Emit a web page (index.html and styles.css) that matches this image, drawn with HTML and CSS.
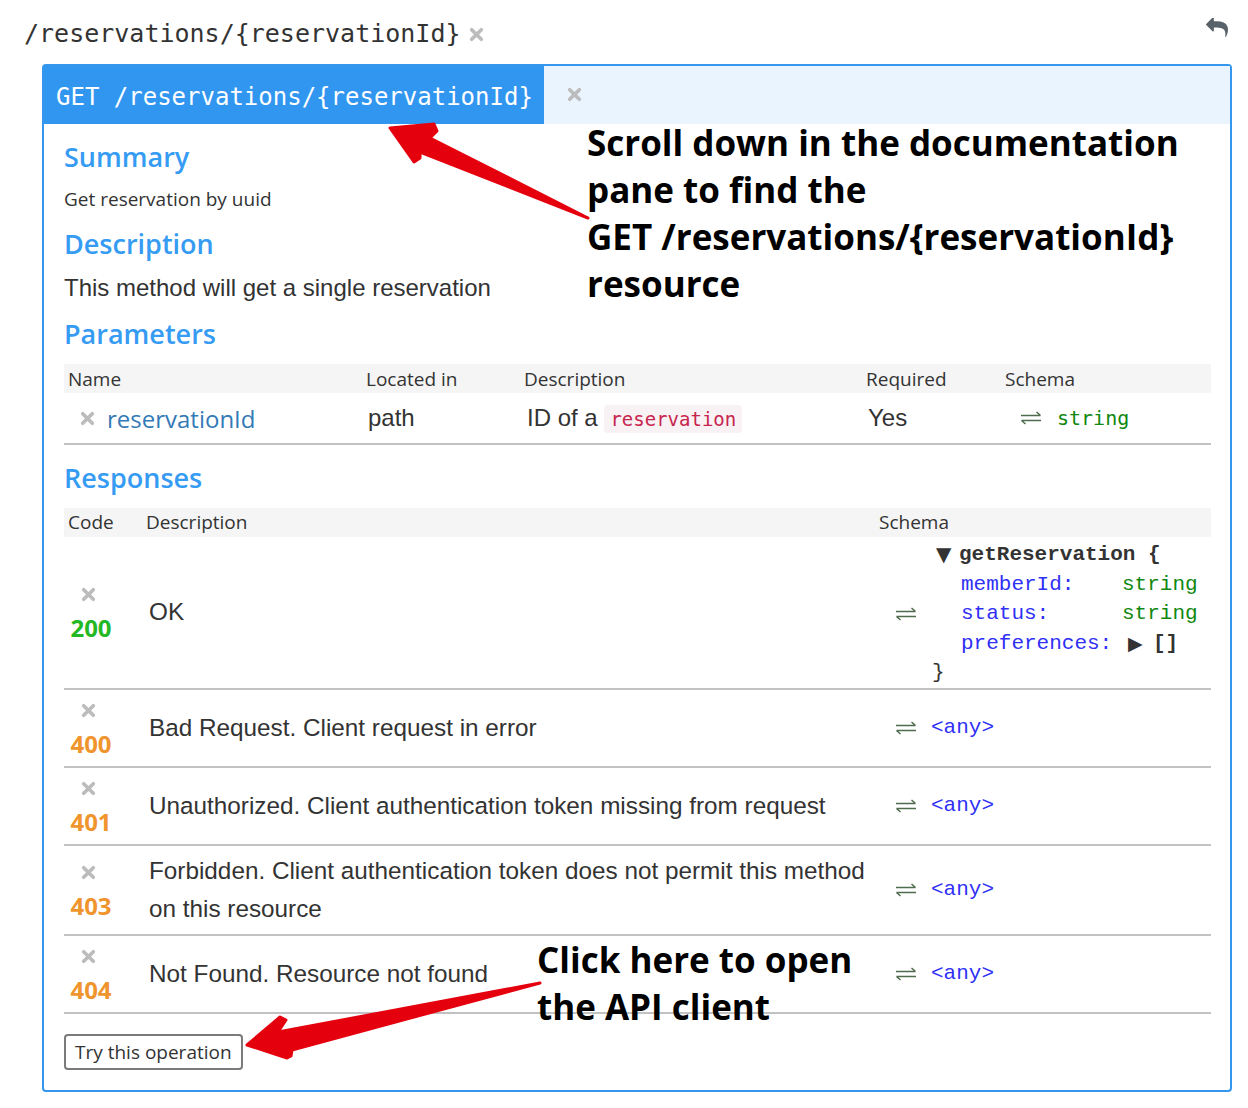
FILE: index.html
```html
<!DOCTYPE html>
<html>
<head>
<meta charset="utf-8">
<title>reservations</title>
<link rel="stylesheet" href="styles.css">
</head>
<body>
<div class="page">
  <div class="topbar">
    <div class="path-title">
      <span class="mono-title">/reservations/{reservationId}</span>
      <svg class="x-icon" viewBox="0 0 14 14"><path d="M2.5 2.5L11.5 11.5M11.5 2.5L2.5 11.5"/></svg>
    </div>
    <svg class="reply-icon" viewBox="0 128 1792 1600"><path d="M1792 1120q0 166-127 451-3 7-10.5 24t-13.5 30-13 22q-12 17-28 17-15 0-23.5-10t-8.5-25q0-9 2.5-26.5t2.5-23.5q5-68 5-123 0-101-17.5-181t-48.5-138.5-80-101-105.5-69.5-133-42.5-154-21.5-175.5-6h-224v256q0 26-19 45t-45 19-45-19l-512-512q-19-19-19-45t19-45l512-512q19-19 45-19t45 19 19 45v256h224q713 0 875 403 53 134 53 333z"/></svg>
  </div>

  <div class="panel">
    <div class="panel-head">
      <div class="tab">GET /reservations/{reservationId}</div>
      <svg class="x-icon x-tab" viewBox="0 0 14 14"><path d="M2.5 2.5L11.5 11.5M11.5 2.5L2.5 11.5"/></svg>
    </div>
    <div class="panel-body">
      <h3 class="sec-title">Summary</h3>
      <p class="summary">Get reservation by uuid</p>
      <h3 class="sec-title sec-gap">Description</h3>
      <p class="desc">This method will get a single reservation</p>
      <h3 class="sec-title sec-gap2">Parameters</h3>

      <div class="ptable">
        <div class="prow phead">
          <div class="pc">Name</div>
          <div class="pc">Located in</div>
          <div class="pc">Description</div>
          <div class="pc">Required</div>
          <div class="pc">Schema</div>
        </div>
        <div class="prow pbody">
          <div class="pc pname">
            <svg class="x-icon" viewBox="0 0 14 14"><path d="M2.5 2.5L11.5 11.5M11.5 2.5L2.5 11.5"/></svg>
            <span class="param-name">reservationId</span>
          </div>
          <div class="pc ptext">path</div>
          <div class="pc ptext pdesc">ID of a <code class="inline-code">reservation</code></div>
          <div class="pc ptext">Yes</div>
          <div class="pc pschema">
            <svg class="swap" viewBox="0 0 22 14"><path d="M1 4.5H20.5M20.5 4.5L16.5 1M21 9.5H1.5M1.5 9.5L5.5 13"/></svg>
            <span class="ptype">string</span>
          </div>
        </div>
      </div>

      <h3 class="sec-title sec-gap3">Responses</h3>

      <div class="rtable">
        <div class="rrow rhead">
          <div class="rh">Code</div>
          <div class="rh">Description</div>
          <div class="rh">Schema</div>
        </div>

        <div class="rrow rbody">
          <div class="rc rcode">
            <div class="code-stack">
              <svg class="x-icon" viewBox="0 0 14 14"><path d="M2.5 2.5L11.5 11.5M11.5 2.5L2.5 11.5"/></svg>
              <span class="code ok">200</span>
            </div>
          </div>
          <div class="rc rdesc">OK</div>
          <div class="rc rschema rschema-model">
            <svg class="swap" viewBox="0 0 22 14"><path d="M1 4.5H20.5M20.5 4.5L16.5 1M21 9.5H1.5M1.5 9.5L5.5 13"/></svg>
            <div class="model">
              <div class="mhead"><span class="tri">▼</span><span class="mname">getReservation {</span></div>
              <div class="mprop"><span class="pn">memberId:</span><span class="pt">string</span></div>
              <div class="mprop"><span class="pn">status:</span><span class="pt">string</span></div>
              <div class="mprop"><span class="pn">preferences:</span><span class="pt-arr"><span class="tri-r">▶</span><span class="brk">[]</span></span></div>
              <div class="mclose">}</div>
            </div>
          </div>
        </div>

        <div class="rrow rbody">
          <div class="rc rcode">
            <div class="code-stack">
              <svg class="x-icon" viewBox="0 0 14 14"><path d="M2.5 2.5L11.5 11.5M11.5 2.5L2.5 11.5"/></svg>
              <span class="code warn">400</span>
            </div>
          </div>
          <div class="rc rdesc">Bad Request. Client request in error</div>
          <div class="rc rschema">
            <svg class="swap" viewBox="0 0 22 14"><path d="M1 4.5H20.5M20.5 4.5L16.5 1M21 9.5H1.5M1.5 9.5L5.5 13"/></svg>
            <span class="any">&lt;any&gt;</span>
          </div>
        </div>

        <div class="rrow rbody">
          <div class="rc rcode">
            <div class="code-stack">
              <svg class="x-icon" viewBox="0 0 14 14"><path d="M2.5 2.5L11.5 11.5M11.5 2.5L2.5 11.5"/></svg>
              <span class="code warn">401</span>
            </div>
          </div>
          <div class="rc rdesc">Unauthorized. Client authentication token missing from request</div>
          <div class="rc rschema">
            <svg class="swap" viewBox="0 0 22 14"><path d="M1 4.5H20.5M20.5 4.5L16.5 1M21 9.5H1.5M1.5 9.5L5.5 13"/></svg>
            <span class="any">&lt;any&gt;</span>
          </div>
        </div>

        <div class="rrow rbody">
          <div class="rc rcode">
            <div class="code-stack">
              <svg class="x-icon" viewBox="0 0 14 14"><path d="M2.5 2.5L11.5 11.5M11.5 2.5L2.5 11.5"/></svg>
              <span class="code warn">403</span>
            </div>
          </div>
          <div class="rc rdesc">Forbidden. Client authentication token does not permit this method on this resource</div>
          <div class="rc rschema">
            <svg class="swap" viewBox="0 0 22 14"><path d="M1 4.5H20.5M20.5 4.5L16.5 1M21 9.5H1.5M1.5 9.5L5.5 13"/></svg>
            <span class="any">&lt;any&gt;</span>
          </div>
        </div>

        <div class="rrow rbody">
          <div class="rc rcode">
            <div class="code-stack">
              <svg class="x-icon" viewBox="0 0 14 14"><path d="M2.5 2.5L11.5 11.5M11.5 2.5L2.5 11.5"/></svg>
              <span class="code warn">404</span>
            </div>
          </div>
          <div class="rc rdesc">Not Found. Resource not found</div>
          <div class="rc rschema">
            <svg class="swap" viewBox="0 0 22 14"><path d="M1 4.5H20.5M20.5 4.5L16.5 1M21 9.5H1.5M1.5 9.5L5.5 13"/></svg>
            <span class="any">&lt;any&gt;</span>
          </div>
        </div>
      </div>

      <button class="try-btn" type="button">Try this operation</button>
    </div>
  </div>

  <svg class="arrows" viewBox="0 0 1248 1108">
    <path class="arrow" d="M390 128 L434 124 L437 131 L430 138 L588 218 L420 152 L420 158 L414 162 Z"/>
    <path class="arrow" d="M247 1045 L280 1017 L286 1020 L278 1032 L540 983 L292 1050 L291 1056 L287 1058 Z"/>
  </svg>

  <div class="note note-top">Scroll down in the documentation<br>pane to find the<br>GET /reservations/{reservationId}<br>resource</div>
  <div class="note note-bottom">Click here to open<br>the API client</div>
</div>
</body>
</html>
```

FILE: styles.css
```css
* { box-sizing: border-box; }

body {
  margin: 0;
  background: #ffffff;
  color: #333333;
  font-family: "Open Sans", "Noto Sans", sans-serif;
}

.page {
  position: relative;
  width: 1248px;
  height: 1108px;
  overflow: hidden;
}

/* top bar */
.topbar {
  height: 64px;
  display: flex;
  justify-content: space-between;
  align-items: flex-start;
  padding: 19px 20px 0 24px;
}
.path-title {
  display: flex;
  align-items: center;
  gap: 8px;
}
.mono-title {
  font-family: "DejaVu Sans Mono", monospace;
  font-size: 25px;
  line-height: 30px;
  color: #333333;
}
.x-icon {
  width: 15px;
  height: 15px;
  flex: none;
}
.x-icon path {
  stroke: #bcbcbc;
  stroke-width: 3.4;
  stroke-linecap: round;
  fill: none;
}
.reply-icon {
  width: 22px;
  height: 20px;
  margin-top: -1px;
  fill: #58626a;
}

/* panel */
.panel {
  margin-left: 42px;
  width: 1190px;
  border: 2px solid #3596ee;
  border-radius: 4px;
}
.panel-head {
  display: flex;
  align-items: center;
  height: 58px;
  background: #e9f4fe;
}
.tab {
  width: 500px;
  height: 58px;
  display: flex;
  align-items: center;
  padding-left: 12px;
  padding-top: 3px;
  background: #3196ef;
  color: #ffffff;
  font-family: "DejaVu Sans Mono", monospace;
  font-size: 24px;
}
.x-tab {
  margin-left: 23px;
  margin-top: -2px;
}

.panel-body {
  padding: 13px 19px 20px 20px;
}

.sec-title {
  margin: 0;
  font-size: 27px;
  line-height: 40px;
  font-weight: 600;
  color: #369bf3;
}
.sec-gap { margin-top: 10px; }
.sec-gap2 { margin-top: 11px; }
.sec-gap3 { margin-top: 13px; }

.summary {
  margin: 7px 0 0;
  font-size: 19px;
  line-height: 30px;
  color: #333333;
}
.desc {
  margin: 9px 0 0;
  font-family: "Liberation Sans", Arial, sans-serif;
  font-size: 24px;
  line-height: 30px;
  color: #333333;
}

/* parameters table */
.ptable {
  margin-top: 10px;
}
.prow {
  display: grid;
  grid-template-columns: 298px 158px 342px 139px 1fr;
}
.phead {
  height: 29px;
  background: #f5f5f5;
  font-size: 19px;
  align-items: center;
}
.phead .pc {
  padding-left: 4px;
}
.pbody {
  height: 52px;
  border-bottom: 2px solid #c2c2c2;
  align-items: center;
}
.pname {
  display: flex;
  align-items: center;
  gap: 12px;
  padding-left: 16px;
}
.param-name {
  font-size: 24px;
  color: #337ab7;
}
.ptext {
  font-family: "Liberation Sans", Arial, sans-serif;
  font-size: 24px;
  padding-left: 6px;
  color: #333333;
}
.pdesc {
  padding-left: 7px;
}
.inline-code {
  font-family: "DejaVu Sans Mono", monospace;
  font-size: 19px;
  color: #c7254e;
  background: #f9f2f4;
  border-radius: 4px;
  padding: 3px 6px;
}
.pschema {
  display: flex;
  align-items: center;
  gap: 15px;
  padding-left: 19px;
}
.swap {
  width: 22px;
  height: 14px;
  flex: none;
}
.swap path {
  fill: none;
  stroke: #4f6c4f;
  stroke-width: 1.5;
}
.ptype {
  font-family: "DejaVu Sans Mono", monospace;
  font-size: 20px;
  color: #118811;
}

/* responses table */
.rtable {
  margin-top: 10px;
}
.rrow {
  display: grid;
  grid-template-columns: 78px 733px 1fr;
}
.rhead {
  height: 29px;
  background: #f5f5f5;
  font-size: 19px;
  line-height: 29px;
}
.rh { padding-left: 4px; }
.rbody {
  border-bottom: 2px solid #c2c2c2;
  align-items: center;
}
.rc {
  padding-top: 6px;
  padding-bottom: 6px;
}
.rcode {
  padding-left: 6px;
}
.code-stack {
  width: 42px;
  height: 64px;
  display: flex;
  flex-direction: column;
  align-items: center;
}
.code-stack .x-icon {
  margin-top: 7px;
  margin-left: -6px;
}
.code {
  margin-top: 11px;
  font-size: 24px;
  line-height: 30px;
  font-weight: 700;
}
.ok { color: #25b825; }
.warn { color: #f0952d; }

.rdesc {
  font-family: "Liberation Sans", Arial, sans-serif;
  font-size: 24.3px;
  line-height: 38px;
  padding-left: 7px;
  padding-right: 4px;
  color: #333333;
}
.rschema {
  display: flex;
  align-items: center;
  gap: 14px;
  padding-left: 20px;
}
.rschema-model {
  padding-top: 3px;
  padding-bottom: 0;
  gap: 15px;
}
.any {
  font-family: "Liberation Mono", "Courier New", monospace;
  font-size: 21px;
  color: #2f2ff5;
}

.model {
  font-family: "Liberation Mono", "Courier New", monospace;
  font-size: 21px;
  line-height: 29.5px;
}
.mhead {
  display: flex;
  align-items: center;
}
.tri {
  font-family: "DejaVu Sans", sans-serif;
  font-size: 20px;
  width: 27px;
  padding-left: 4px;
  color: #333333;
}
.mname {
  font-weight: 700;
  color: #333333;
}
.mprop {
  display: flex;
  padding-left: 29px;
}
.pn {
  width: 161px;
  color: #2f2ff5;
}
.pt {
  color: #118811;
}
.pt-arr {
  display: flex;
  align-items: center;
  color: #333333;
  font-weight: 700;
}
.tri-r {
  font-family: "DejaVu Sans", sans-serif;
  font-size: 19px;
  font-weight: 400;
  margin-left: 6px;
  width: 25px;
}
.mclose {
  color: #333333;
}

/* button */
.try-btn {
  display: block;
  margin-top: 20px;
  height: 36px;
  padding: 0 9px;
  background: #ffffff;
  border: 2px solid #7b7b7b;
  border-radius: 4px;
  font-family: "Open Sans", sans-serif;
  font-size: 19px;
  color: #333333;
}

/* annotation overlays */
.arrows {
  position: absolute;
  left: 0;
  top: 0;
  width: 1248px;
  height: 1108px;
  pointer-events: none;
}
.arrow {
  fill: #e5000e;
  stroke: #e5000e;
  stroke-width: 3;
  stroke-linejoin: round;
}
.note {
  position: absolute;
  font-family: "Open Sans", sans-serif;
  font-weight: 700;
  font-size: 35px;
  line-height: 47px;
  color: #000000;
  white-space: nowrap;
}
.note-top {
  left: 587px;
  top: 119px;
}
.note-bottom {
  left: 537px;
  top: 936px;
}
```
